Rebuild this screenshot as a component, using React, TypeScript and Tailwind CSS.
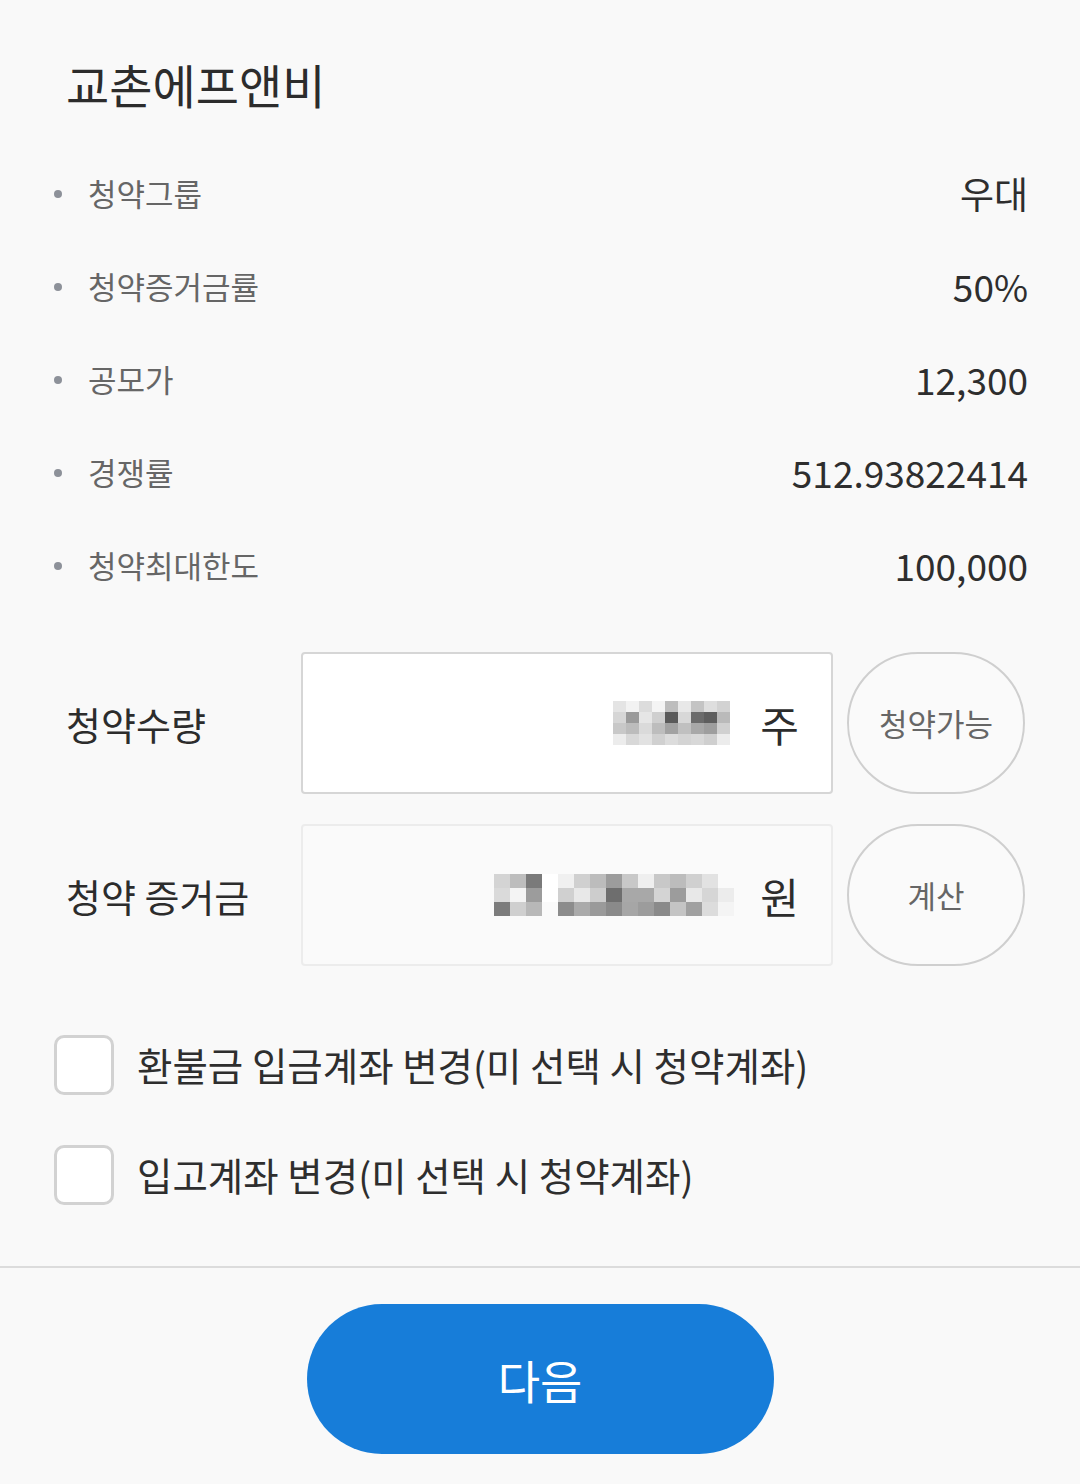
import React from "react";

const FONT = { fontFamily: '"Noto Sans CJK KR", "Noto Sans", sans-serif' };

const infoRows = [
  { label: "청약그룹", value: "우대" },
  { label: "청약증거금률", value: "50%" },
  { label: "공모가", value: "12,300" },
  { label: "경쟁률", value: "512.93822414" },
  { label: "청약최대한도", value: "100,000" },
];

// pixelated (masked) values, as in the screenshot
const mosaicQty = [
  ["#e4e4e4", "#f2f2f2", "#dcdcdc", "#f4f4f4", "#bdbdbd", "#e8e8e8", "#c4c4c4", "#dedede", "#d2d2d2"],
  ["#d6d6d6", "#9a9a9a", "#e6e6e6", "#cfcfcf", "#5a5a5a", "#d8d8d8", "#6b6b6b", "#5e5e5e", "#bababa"],
  ["#c8c8c8", "#bcbcbc", "#dadada", "#bdbdbd", "#a2a2a2", "#c0c0c0", "#a8a8a8", "#9e9e9e", "#d0d0d0"],
  ["#ececec", "#d8d8d8", "#e2e2e2", "#d0d0d0", "#dcdcdc", "#d4d4d4", "#d8d8d8", "#cfcfcf", "#ececec"],
];

const mosaicAmt = [
  ["#d4d4d4", "#bdbdbd", "#7a7a7a", "#ffffff", "#f0f0f0", "#d0d0d0", "#bcbcbc", "#9c9c9c", "#c8c8c8", "#efefef", "#c8c8c8", "#bcbcbc", "#d0d0d0", "#e2e2e2", "#fafafa"],
  ["#dadada", "#f4f4f4", "#9c9c9c", "#ffffff", "#d0d0d0", "#e8e8e8", "#cdcdcd", "#6e6e6e", "#a8a8a8", "#a8a8a8", "#d4d4d4", "#9c9c9c", "#e8e8e8", "#d6d6d6", "#ececec"],
  ["#7c7c7c", "#cfcfcf", "#b8b8b8", "#fafafa", "#8c8c8c", "#aaaaaa", "#9a9a9a", "#8a8a8a", "#a6a6a6", "#9c9c9c", "#8a8a8a", "#c4c4c4", "#a0a0a0", "#dcdcdc", "#f4f4f4"],
];

function Mosaic({ cells, cellW, cellH }: { cells: string[][]; cellW: number; cellH: number }) {
  return (
    <div className="flex flex-col">
      {cells.map((row, i) => (
        <div key={i} className="flex">
          {row.map((c, j) => (
            <div key={j} style={{ width: cellW, height: cellH, background: c }} />
          ))}
        </div>
      ))}
    </div>
  );
}

function Checkbox({ label }: { label: string }) {
  return (
    <div className="flex items-center h-[110px]">
      <div className="w-[60px] h-[60px] rounded-[10px] border-[3px] border-[#d2d2d2] bg-white shrink-0" />
      <span className="ml-[23px] text-[38.5px] text-[#2e2e2e]">{label}</span>
    </div>
  );
}

export default function App() {
  return (
    <div className="w-[1080px] h-[1484px] bg-[#f9f9f9] flex flex-col" style={FONT}>
      <h1 className="pl-[66px] pt-[56px] text-[47px] leading-[55px] text-[#2c2c2c] font-normal">
        교촌에프앤비
      </h1>

      <ul className="mt-[36px] pl-[54px] pr-[52px]">
        {infoRows.map((r) => (
          <li key={r.label} className="flex items-center h-[93px]">
            <span className="w-[8px] h-[8px] rounded-full bg-[#8d9199]" />
            <span className="ml-[26px] text-[31px] text-[#666666]">{r.label}</span>
            <span className="ml-auto text-[37px] text-[#2e2e2e]">{r.value}</span>
          </li>
        ))}
      </ul>

      <div className="mt-[40px] pl-[66px] pr-[55px] flex flex-col gap-[30px]">
        <div className="flex items-center">
          <span className="w-[235px] text-[38px] text-[#2c2c2c]">청약수량</span>
          <div className="w-[532px] h-[142px] bg-white border-2 border-[#d6d6d6] rounded-[4px] flex items-center justify-end pr-[32px]">
            <Mosaic cells={mosaicQty} cellW={13} cellH={11} />
            <span className="ml-[30px] text-[42px] text-[#2c2c2c]">주</span>
          </div>
          <button className="ml-[14px] w-[178px] h-[142px] rounded-full border-2 border-[#cfcfcf] bg-[#fafafa] text-[31px] text-[#666666]">
            청약가능
          </button>
        </div>

        <div className="flex items-center">
          <span className="w-[235px] text-[38px] text-[#2c2c2c]">청약 증거금</span>
          <div className="w-[532px] h-[142px] bg-[#fafafa] border-2 border-[#ececec] rounded-[4px] flex items-center justify-end pr-[32px]">
            <Mosaic cells={mosaicAmt} cellW={16} cellH={14} />
            <span className="ml-[26px] text-[42px] text-[#2c2c2c]">원</span>
          </div>
          <button className="ml-[14px] w-[178px] h-[142px] rounded-full border-2 border-[#cfcfcf] bg-[#fafafa] text-[31px] text-[#666666]">
            계산
          </button>
        </div>
      </div>

      <div className="mt-[44px] pl-[54px]">
        <Checkbox label="환불금 입금계좌 변경(미 선택 시 청약계좌)" />
        <Checkbox label="입고계좌 변경(미 선택 시 청약계좌)" />
      </div>

      <div className="mt-[36px] h-[2px] bg-[#dcdcdc]" />

      <div className="flex justify-center pt-[36px]">
        <button className="w-[467px] h-[150px] rounded-full bg-[#177dd9] text-white text-[46px]">
          다음
        </button>
      </div>
    </div>
  );
}
